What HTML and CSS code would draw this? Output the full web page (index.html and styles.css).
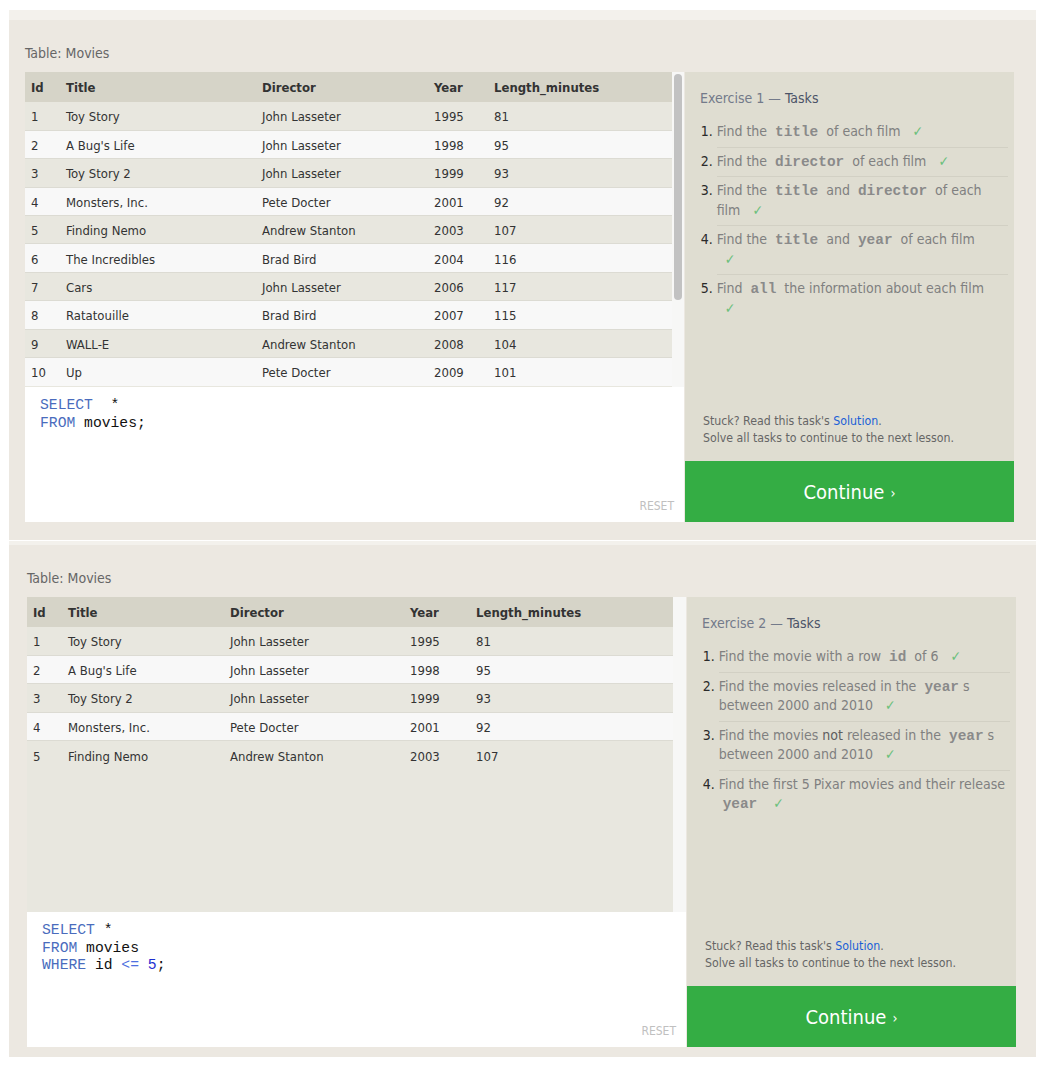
FILE: index.html
```html
<!DOCTYPE html>
<html lang="en">
<head>
<meta charset="utf-8">
<title>SQL Lesson - Movies</title>
<link rel="stylesheet" href="styles.css">
</head>
<body>
<div class="page">

  <section class="lesson lesson-one">
    <div class="table-label">Table: Movies</div>
    <div class="workspace">
      <div class="left-col">
        <div class="results">
          <div class="grid-wrap">
            <table class="movies movies-one">
              <colgroup><col class="c-id"><col class="c-title"><col class="c-dir"><col class="c-year"><col class="c-len"></colgroup>
              <thead><tr><th>Id</th><th>Title</th><th>Director</th><th>Year</th><th>Length_minutes</th></tr></thead>
              <tbody>
                <tr><td>1</td><td>Toy Story</td><td>John Lasseter</td><td>1995</td><td>81</td></tr>
                <tr><td>2</td><td>A Bug's Life</td><td>John Lasseter</td><td>1998</td><td>95</td></tr>
                <tr><td>3</td><td>Toy Story 2</td><td>John Lasseter</td><td>1999</td><td>93</td></tr>
                <tr><td>4</td><td>Monsters, Inc.</td><td>Pete Docter</td><td>2001</td><td>92</td></tr>
                <tr><td>5</td><td>Finding Nemo</td><td>Andrew Stanton</td><td>2003</td><td>107</td></tr>
                <tr><td>6</td><td>The Incredibles</td><td>Brad Bird</td><td>2004</td><td>116</td></tr>
                <tr><td>7</td><td>Cars</td><td>John Lasseter</td><td>2006</td><td>117</td></tr>
                <tr><td>8</td><td>Ratatouille</td><td>Brad Bird</td><td>2007</td><td>115</td></tr>
                <tr><td>9</td><td>WALL-E</td><td>Andrew Stanton</td><td>2008</td><td>104</td></tr>
                <tr><td>10</td><td>Up</td><td>Pete Docter</td><td>2009</td><td>101</td></tr>
              </tbody>
            </table>
          </div>
          <div class="scroll-track track-one"><div class="scroll-thumb"></div></div>
        </div>
        <div class="editor">
          <pre class="code"><span class="kw">SELECT</span>  *
<span class="kw">FROM</span> movies;</pre>
          <div class="reset">RESET</div>
        </div>
      </div>
      <aside class="right-col">
        <div class="task-box">
          <h3 class="task-title"><span class="ex">Exercise 1 — </span><span class="tk">Tasks</span></h3>
          <ol class="task-list">
            <li>Find the <code>title</code> of each film <span class="check">✓</span></li>
            <li>Find the <code>director</code> of each film <span class="check">✓</span></li>
            <li>Find the <code>title</code> and <code>director</code> of each film <span class="check">✓</span></li>
            <li>Find the <code>title</code> and <code>year</code> of each film <span class="check">✓</span></li>
            <li>Find <code>all</code> the information about each film <span class="check">✓</span></li>
          </ol>
          <div class="notes">
            <div>Stuck? Read this task's <a class="sol" href="#">Solution</a>.</div>
            <div>Solve all tasks to continue to the next lesson.</div>
          </div>
        </div>
        <a class="continue" href="#">Continue <span class="chev">›</span></a>
      </aside>
    </div>
  </section>

  <section class="lesson lesson-two">
    <div class="table-label">Table: Movies</div>
    <div class="workspace">
      <div class="left-col">
        <div class="results">
          <div class="grid-wrap">
            <table class="movies movies-two">
              <colgroup><col class="c-id"><col class="c-title"><col class="c-dir"><col class="c-year"><col class="c-len"></colgroup>
              <thead><tr><th>Id</th><th>Title</th><th>Director</th><th>Year</th><th>Length_minutes</th></tr></thead>
              <tbody>
                <tr><td>1</td><td>Toy Story</td><td>John Lasseter</td><td>1995</td><td>81</td></tr>
                <tr><td>2</td><td>A Bug's Life</td><td>John Lasseter</td><td>1998</td><td>95</td></tr>
                <tr><td>3</td><td>Toy Story 2</td><td>John Lasseter</td><td>1999</td><td>93</td></tr>
                <tr><td>4</td><td>Monsters, Inc.</td><td>Pete Docter</td><td>2001</td><td>92</td></tr>
                <tr><td>5</td><td>Finding Nemo</td><td>Andrew Stanton</td><td>2003</td><td>107</td></tr>
              </tbody>
            </table>
          </div>
          <div class="scroll-track track-two"></div>
        </div>
        <div class="editor">
          <pre class="code"><span class="kw">SELECT</span> *
<span class="kw">FROM</span> movies
<span class="kw">WHERE</span> id <span class="op">&lt;=</span> <span class="num">5</span>;</pre>
          <div class="reset">RESET</div>
        </div>
      </div>
      <aside class="right-col">
        <div class="task-box">
          <h3 class="task-title"><span class="ex">Exercise 2 — </span><span class="tk">Tasks</span></h3>
          <ol class="task-list">
            <li>Find the movie with a row <code>id</code> of 6 <span class="check">✓</span></li>
            <li>Find the movies released in the <code>year</code>s between 2000 and 2010 <span class="check">✓</span></li>
            <li>Find the movies <b class="em">not</b> released in the <code>year</code>s between 2000 and 2010 <span class="check">✓</span></li>
            <li>Find the first 5 Pixar movies and their release <code>year</code> <span class="check">✓</span></li>
          </ol>
          <div class="notes">
            <div>Stuck? Read this task's <a class="sol" href="#">Solution</a>.</div>
            <div>Solve all tasks to continue to the next lesson.</div>
          </div>
        </div>
        <a class="continue" href="#">Continue <span class="chev">›</span></a>
      </aside>
    </div>
  </section>

</div>
</body>
</html>
```

FILE: styles.css
```css
* { box-sizing: border-box; }

html, body {
  margin: 0;
  padding: 0;
  background: #ffffff;
}

body {
  font-family: "DejaVu Sans Condensed", "DejaVu Sans", sans-serif;
  color: #333;
}

.page {
  padding: 10px 15px 14px 9px;
}

.lesson {
  background: #ece8e1;
}

.lesson-one {
  border-top: 10px solid #f3f1ec;
  padding: 24px 22px 18px 16px;
  margin-bottom: 1px;
}

.lesson-two {
  border-top: 4px solid #f3f1ec;
  padding: 24px 20px 10px 18px;
}

.table-label {
  font-size: 14px;
  line-height: 18px;
  color: #666;
  margin-bottom: 10px;
}

.workspace {
  display: flex;
  height: 450px;
  gap: 1px;
}

.left-col {
  width: 659px;
  display: flex;
  flex-direction: column;
}

.results {
  display: flex;
  height: 315px;
  flex: none;
}

.grid-wrap {
  flex: 1;
  overflow: hidden;
  background: #e8e7df;
}

.scroll-track {
  background: #f7f7f6;
  padding: 2px 2px 0 2px;
}

.track-one { width: 12px; }
.track-two { width: 13px; }

.scroll-thumb {
  height: 226px;
  background: #c2c2c2;
  border-radius: 4px;
}

.movies {
  border-collapse: collapse;
  table-layout: fixed;
  width: 100%;
  font-size: 13px;
}

.movies th,
.movies td {
  text-align: left;
  padding: 0 6px;
  white-space: nowrap;
}

.movies th {
  height: 30px;
  background: #d6d4c8;
  font-weight: bold;
  color: #333;
}

.movies td {
  height: 28.4px;
  padding-top: 2px;
  color: #333;
  border-top: 1px solid #dcdbd3;
}

.movies tbody tr:nth-child(odd) td { background: #e8e7df; }
.movies tbody tr:nth-child(even) td { background: #f8f8f8; }
.movies tbody tr:first-child td { border-top: none; }

.movies-one .c-id { width: 35px; }
.movies-one .c-title { width: 196px; }
.movies-one .c-dir { width: 172px; }
.movies-one .c-year { width: 60px; }

.movies-two .c-id { width: 35px; }
.movies-two .c-title { width: 162px; }
.movies-two .c-dir { width: 180px; }
.movies-two .c-year { width: 66px; }

.editor {
  flex: 1;
  background: #ffffff;
  display: flex;
  flex-direction: column;
  padding: 10px 10px 8px 15px;
}

.code {
  flex: 1;
  margin: 0;
  font-family: "Liberation Mono", monospace;
  font-size: 14.7px;
  line-height: 17.6px;
  color: #111;
}

.kw { color: #4a6cbd; }
.op { color: #4d6fe0; }
.num { color: #1c2fd0; }

.reset {
  align-self: flex-end;
  font-size: 12px;
  line-height: 16px;
  color: #c0c0c0;
}

.right-col {
  width: 329px;
  display: flex;
  flex-direction: column;
}

.task-box {
  flex: 1;
  background: #dfddd1;
  padding: 16px 6px 14.5px 15px;
  display: flex;
  flex-direction: column;
}

.task-title {
  margin: 0;
  font-size: 14px;
  line-height: 20px;
  font-weight: normal;
}

.task-title .ex { color: #737a8a; }
.task-title .tk { color: #4b5367; }

.task-list {
  margin: 10px 0 0 0;
  padding: 0 0 0 16.7px;
  font-size: 14px;
  line-height: 19.5px;
  color: #808080;
}

.task-list li {
  padding: 4px 3px 5px 0;
  border-bottom: 1px solid #d2d0c4;
}

.task-list li:last-child { border-bottom: none; }

.task-list li::marker {
  color: #2a2a2a;
}

.task-list code {
  font-family: "Liberation Mono", monospace;
  font-weight: bold;
  font-size: 14.4px;
  line-height: 1;
  color: #8a8a8a;
  margin: 0 4px;
}

.task-list .em {
  font-weight: normal;
  color: #5e5e5e;
}

.check {
  display: inline-block;
  color: #6cc07c;
  margin: 0 12px 0 8px;
  line-height: 1;
}

.notes {
  margin-top: auto;
  margin-left: 3px;
  font-size: 12.25px;
  line-height: 17px;
  color: #666;
}

.sol {
  color: #1a5fd6;
  text-decoration: none;
}

.continue {
  height: 61px;
  flex: none;
  background: #34ad44;
  color: #ffffff;
  text-decoration: none;
  font-size: 20px;
  display: flex;
  align-items: center;
  justify-content: center;
  gap: 6px;
}

.continue .chev {
  font-size: 14px;
  margin-top: 2px;
}
```
